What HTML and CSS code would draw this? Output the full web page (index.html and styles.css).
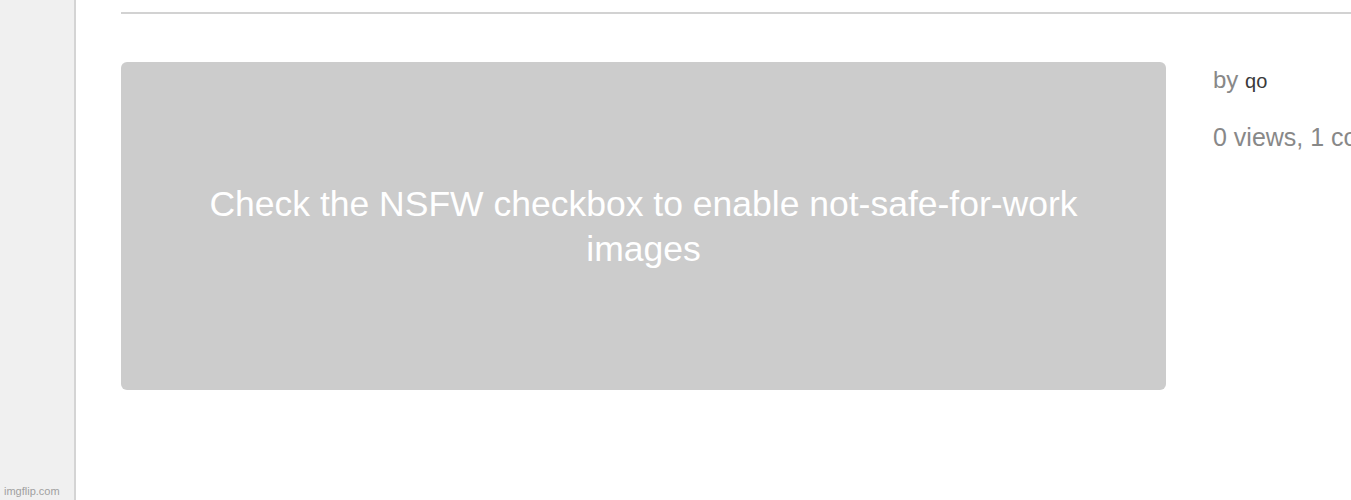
FILE: index.html
```html
<html><head>
<meta charset="UTF-8">
<meta name="viewport" content="width=device-width, initial-scale=1.0">
<title>imgflip</title>
<link rel="stylesheet" href="styles.css">
</head>
<body>
  <div class="page">
    <aside class="sidebar">
      <div class="watermark">imgflip.com</div>
    </aside>

    <main class="main">
      <div class="top-rule"></div>
      <div class="post">
        <div class="nsfw-box">
          <div class="nsfw-text">Check the NSFW checkbox to enable not-safe-for-work images</div>
        </div>
        <div class="post-info">
          <div class="author">by <a class="author-name">qo</a></div>
          <div class="stats">0 views, 1 comment</div>
        </div>
      </div>
    </main>
  </div>
</body></html>
```

FILE: styles.css
```css
body {
  font-family: 'Liberation Sans', Arial, sans-serif;
  margin: 0;
  padding: 0;
  background-color: white;
  color: #333;
  overflow: hidden;
}
.page {
  display: flex;
  height: 100vh;
}
.sidebar {
  width: 74px;
  flex-shrink: 0;
  background-color: #f0f0f0;
  border-right: 2px solid #d4d4d4;
  display: flex;
  flex-direction: column;
  justify-content: flex-end;
}
.watermark {
  font-size: 11px;
  color: #a0a0a0;
  padding: 0 0 3px 4px;
}
.main {
  flex-grow: 1;
  padding-left: 45px;
  min-width: 0;
  overflow: hidden;
}
.top-rule {
  margin-top: 12px;
  border-top: 2px solid #d2d2d2;
}
.post {
  display: flex;
  margin-top: 48px;
}
.nsfw-box {
  width: 1045px;
  height: 328px;
  flex-shrink: 0;
  background-color: #cccccc;
  border-radius: 6px;
  display: flex;
  align-items: center;
  justify-content: center;
  padding: 0 40px;
  box-sizing: border-box;
}
.nsfw-text {
  color: white;
  font-size: 35.5px;
  text-align: center;
  line-height: 45px;
  padding-top: 2px;
}
.post-info {
  margin-left: 47px;
  white-space: nowrap;
  padding-top: 4px;
}
.author {
  font-size: 24px;
  color: #888;
}
.author-name {
  font-size: 20px;
  color: #3a3a3a;
  text-decoration: none;
}
.stats {
  font-size: 25px;
  color: #888;
  margin-top: 29px;
}
```
